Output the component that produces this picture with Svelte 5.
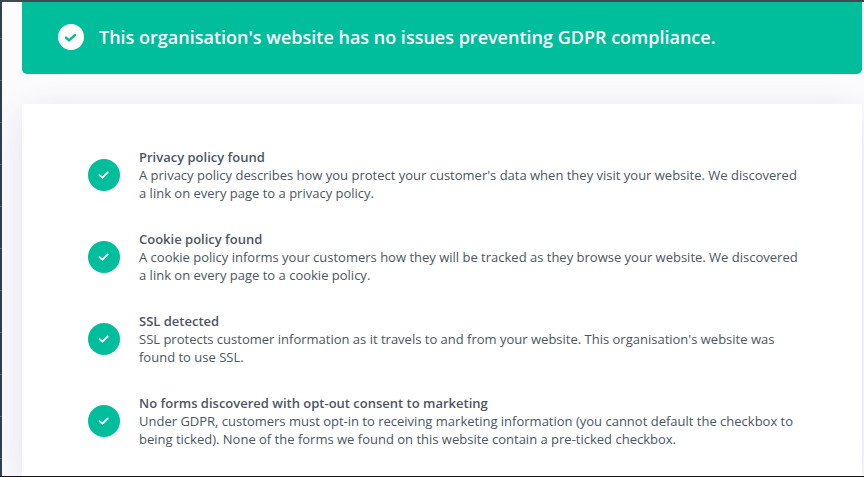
<script lang="ts">
  interface Check {
    title: string;
    text: string;
  }

  const checks: Check[] = [
    {
      title: "Privacy policy found",
      text: "A privacy policy describes how you protect your customer's data when they visit your website. We discovered a link on every page to a privacy policy.",
    },
    {
      title: "Cookie policy found",
      text: "A cookie policy informs your customers how they will be tracked as they browse your website. We discovered a link on every page to a cookie policy.",
    },
    {
      title: "SSL detected",
      text: "SSL protects customer information as it travels to and from your website. This organisation's website was found to use SSL.",
    },
    {
      title: "No forms discovered with opt-out consent to marketing",
      text: "Under GDPR, customers must opt-in to receiving marketing information (you cannot default the checkbox to being ticked). None of the forms we found on this website contain a pre-ticked checkbox.",
    },
  ];
</script>

<div class="page">
  <div class="rail"></div>
  <main>
    <header class="banner">
      <svg class="banner-icon" viewBox="0 0 26 26" aria-hidden="true">
        <circle cx="13" cy="13" r="13" fill="#fff" />
        <path d="M8 13.6l3 2.8 6.1-5.4" />
      </svg>
      <h1>This organisation's website has no issues preventing GDPR compliance.</h1>
    </header>

    <section class="card">
      <ul>
        {#each checks as check}
          <li>
            <svg class="check-icon" viewBox="0 0 32 32" aria-hidden="true">
              <circle cx="16" cy="16" r="16" fill="#00bd9c" />
              <path d="M11.6 16.2l2.8 2.5 5.3-5.2" />
            </svg>
            <div class="check-text">
              <h2>{check.title}</h2>
              <p>{check.text}</p>
            </div>
          </li>
        {/each}
      </ul>
    </section>
  </main>
</div>

<style>
  :global(body) {
    margin: 0;
    background: #fcfcfe;
    color: #4b5663;
    font-family: Muli, "Open Sans", sans-serif;
  }

  .page {
    box-sizing: border-box;
    display: flex;
    min-height: 100vh;
    overflow: hidden;
    border-top: 2px solid #404850;
    border-bottom: 1px solid #14121f;
  }

  .rail {
    flex: none;
    width: 2px;
    background: repeating-linear-gradient(
      #303e4e 0 36px,
      #5a6672 36px 37px,
      #303e4e 37px 42px
    );
  }

  main {
    display: flex;
    flex: 1;
    flex-direction: column;
    gap: 30px;
    padding: 0 2px 0 20px;
  }

  .banner {
    display: flex;
    align-items: center;
    gap: 15px;
    min-height: 72px;
    padding: 0 36px 2px;
    box-sizing: border-box;
    border-radius: 0 0 5px 5px;
    background: #00bd9c;
    color: #fff;
    z-index: 1;
  }

  .banner-icon {
    flex: none;
    width: 26px;
    height: 26px;
  }

  .banner-icon path {
    fill: none;
    stroke: #00bd9c;
    stroke-width: 2.4;
    stroke-linecap: round;
  }

  h1 {
    margin: 0;
    font-size: 18px;
    font-weight: 600;
    line-height: 24px;
  }

  .card {
    flex: 1;
    padding: 44px 64px 28px 66px;
    background: #fff;
    box-shadow: 0 10px 40px rgba(60, 60, 110, 0.14);
  }

  ul {
    display: flex;
    flex-direction: column;
    gap: 28px;
    margin: 0;
    padding: 0;
    list-style: none;
  }

  li {
    display: flex;
    align-items: center;
    gap: 19px;
  }

  .check-icon {
    flex: none;
    width: 32px;
    height: 32px;
  }

  .check-icon path {
    fill: none;
    stroke: #fff;
    stroke-width: 1.8;
    stroke-linecap: round;
  }

  .check-text {
    flex: 1;
    font-size: 13px;
    line-height: 18px;
  }

  h2,
  p {
    margin: 0;
    font-size: inherit;
  }

  h2 {
    font-weight: 600;
  }
</style>
